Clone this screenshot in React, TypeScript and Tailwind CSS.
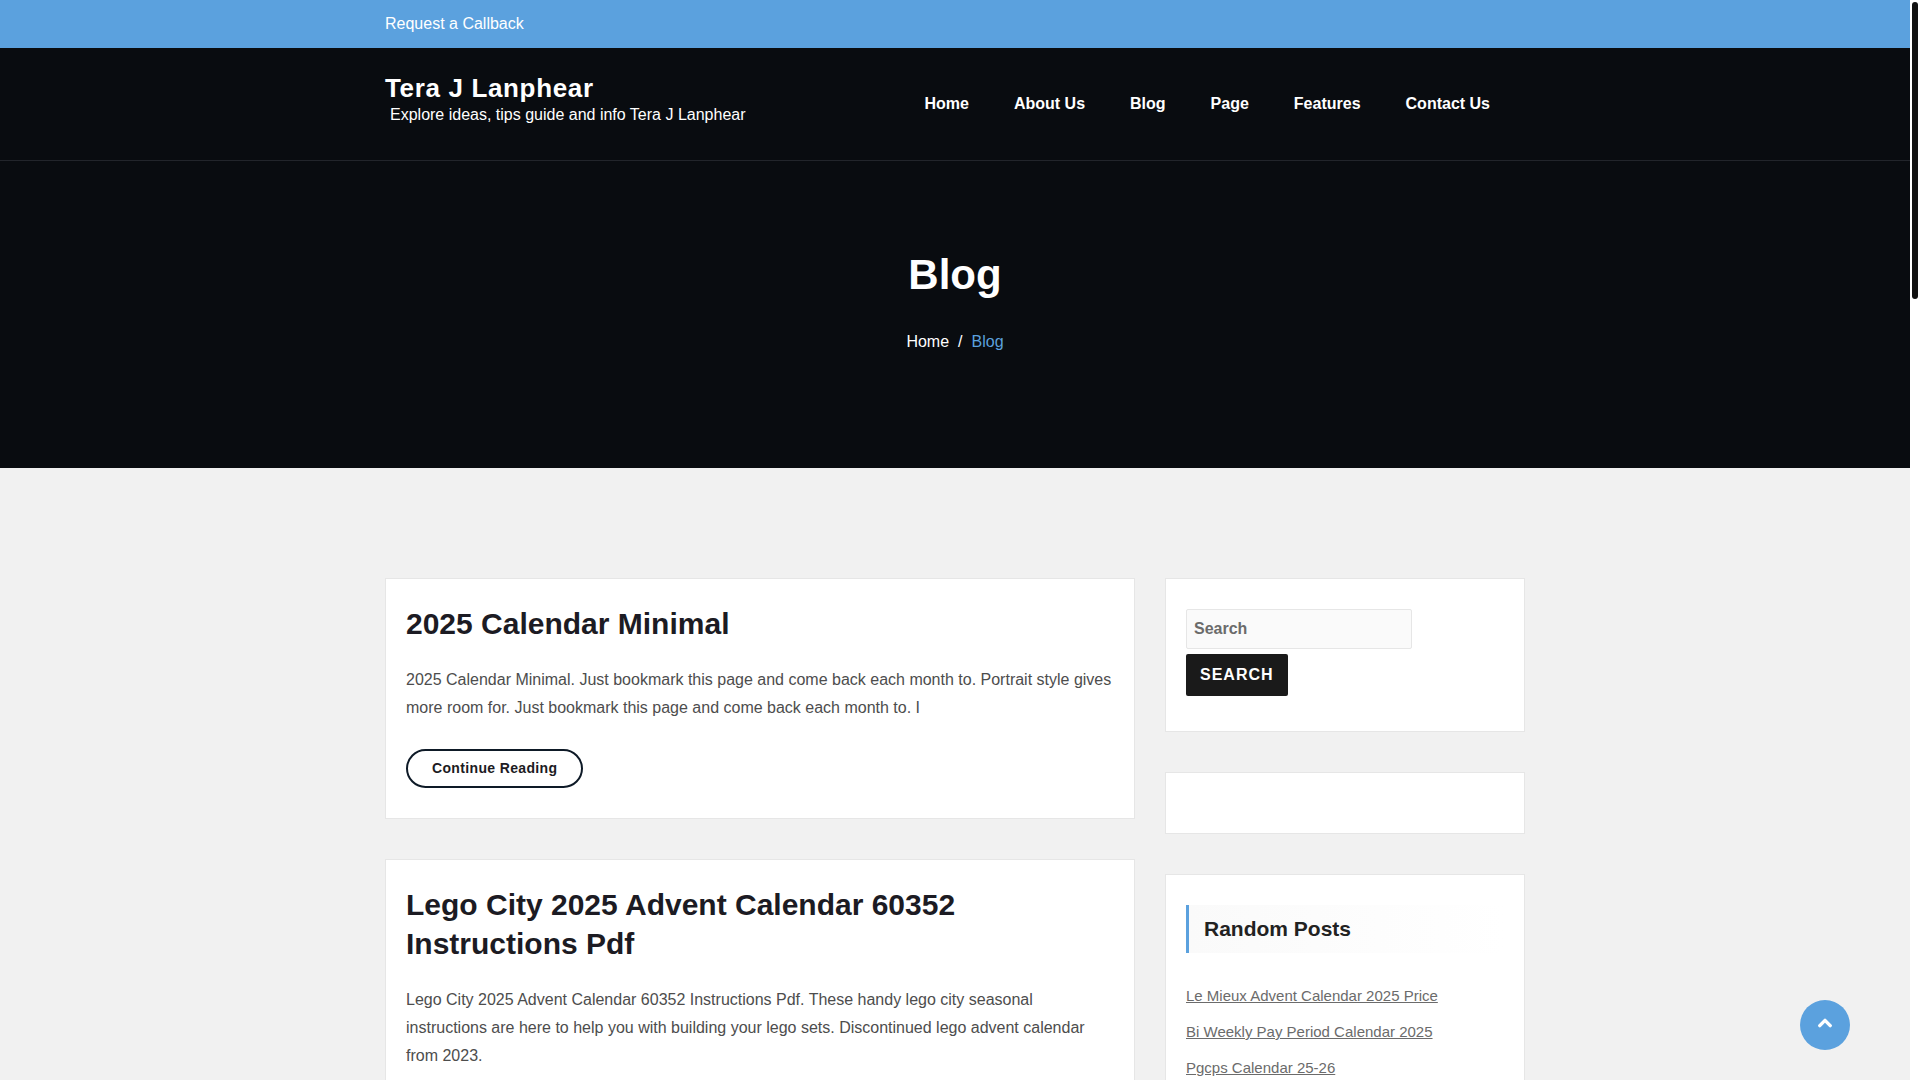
import React from "react";

const navLinks = ["Home", "About Us", "Blog", "Page", "Features", "Contact Us"];

const posts = [
  {
    title: "2025 Calendar Minimal",
    text: "2025 Calendar Minimal. Just bookmark this page and come back each month to. Portrait style gives more room for. Just bookmark this page and come back each month to. I",
    more: true,
  },
  {
    title: "Lego City 2025 Advent Calendar 60352 Instructions Pdf",
    text: "Lego City 2025 Advent Calendar 60352 Instructions Pdf. These handy lego city seasonal instructions are here to help you with building your lego sets. Discontinued lego advent calendar from 2023.",
    more: false,
  },
];

const randomPosts = [
  "Le Mieux Advent Calendar 2025 Price",
  "Bi Weekly Pay Period Calendar 2025",
  "Pgcps Calendar 25-26",
];

function Header() {
  return (
    <header>
      <div className="bg-[#5ba1de] text-white">
        <div className="mx-auto max-w-[1140px] py-3 leading-6">
          <a href="#callback">Request a Callback</a>
        </div>
      </div>
      <div className="border-b border-[#22252b] bg-[#090c10] text-white">
        <div className="mx-auto flex h-28 max-w-[1140px] items-center justify-between pr-[35px]">
          <div className="pb-2">
            <a href="#home" className="block text-[26px] leading-[30px] font-bold tracking-wide">
              Tera J Lanphear
            </a>
            <p className="pl-[5px] leading-6">Explore ideas, tips guide and info Tera J Lanphear</p>
          </div>
          <nav className="flex gap-[45px] font-bold">
            {navLinks.map((label) => (
              <a key={label} href="#nav">
                {label}
              </a>
            ))}
          </nav>
        </div>
      </div>
    </header>
  );
}

function Hero() {
  return (
    <section className="bg-[#090c10] pt-[86px] pb-[114px] text-center text-white">
      <h1 className="text-[42px] leading-[55px] font-bold">Blog</h1>
      <nav aria-label="Breadcrumb" className="flex justify-center gap-2 pt-7 leading-6">
        <a href="#home">Home</a>
        <span className="px-px">/</span>
        <span className="text-[#5ba1de]">Blog</span>
      </nav>
    </section>
  );
}

function Post({ title, text, more }: { title: string; text: string; more: boolean }) {
  return (
    <article className="border border-[#e6e6e6] bg-white px-5 pt-[25px] pb-[30px]">
      <h2 className="text-[30px] leading-[39px] font-bold text-[#1c1b23]">
        <a href="#post">{title}</a>
      </h2>
      <p className="mt-[23px] leading-7 text-[#4d4d4d]">{text}</p>
      {more && (
        <a
          href="#post"
          className="mt-[27px] inline-block rounded-full border-2 border-[#0e1a27] px-6 py-2 align-top text-sm leading-[19px] font-bold tracking-wide text-[#1c1b23]"
        >
          Continue Reading
        </a>
      )}
    </article>
  );
}

function Widget({ children }: { children?: React.ReactNode }) {
  return <section className="border border-[#e6e6e6] bg-white px-5 py-[30px]">{children}</section>;
}

function Sidebar() {
  return (
    <aside className="flex w-[360px] shrink-0 flex-col gap-10">
      <Widget>
        <form className="flex flex-col items-start gap-[5px] pb-[5px]" onSubmit={(e) => e.preventDefault()}>
          <input
            type="search"
            aria-label="Search"
            placeholder="Search"
            className="h-10 w-[226px] rounded-xs border border-[#e6e6e6] bg-[#fafafa] px-[7px] font-bold placeholder:text-[#6b6b6b]"
          />
          <button
            type="submit"
            className="h-[42px] rounded-xs bg-[#1a1a1a] px-[14px] font-bold tracking-[1px] text-white uppercase"
          >
            Search
          </button>
        </form>
      </Widget>
      <Widget />
      <Widget>
        <h2 className="border-l-[3px] border-[#5ba1de] bg-linear-to-r from-[#fafafa] to-white py-[10px] pl-[15px] text-[21px] leading-7 font-bold text-[#222222]">
          Random Posts
        </h2>
        <ul className="pt-[25px] text-[15px] leading-9 text-[#6b6b6b]">
          {randomPosts.map((title) => (
            <li key={title}>
              <a href="#post" className="underline">
                {title}
              </a>
            </li>
          ))}
        </ul>
      </Widget>
    </aside>
  );
}

export default function App() {
  return (
    <div className="flex h-screen overflow-hidden bg-white font-['Liberation_Sans',Arial,sans-serif] text-base">
      <div className="min-w-0 flex-1 overflow-hidden bg-[#f1f1f1]">
        <Header />
        <Hero />
        <main className="mx-auto flex max-w-[1140px] items-start gap-[30px] py-[110px]">
          <div className="flex min-w-0 flex-1 flex-col gap-10">
            {posts.map((post) => (
              <Post key={post.title} {...post} />
            ))}
          </div>
          <Sidebar />
        </main>
      </div>
      <div aria-hidden="true" className="w-[10px] shrink-0 p-0.5">
        <div className="h-[297px] rounded-full bg-[#111111]" />
      </div>
      <button
        type="button"
        aria-label="Back to top"
        className="fixed right-[70px] bottom-[30px] flex size-[50px] items-center justify-center rounded-full bg-[#5ba1de] pb-1 text-white"
      >
        <svg width="14" height="10" viewBox="0 0 14 10" fill="none" stroke="currentColor" strokeWidth="3.4" strokeLinecap="round" strokeLinejoin="round">
          <path d="M1.8 7.6 7 2.4l5.2 5.2" />
        </svg>
      </button>
    </div>
  );
}
